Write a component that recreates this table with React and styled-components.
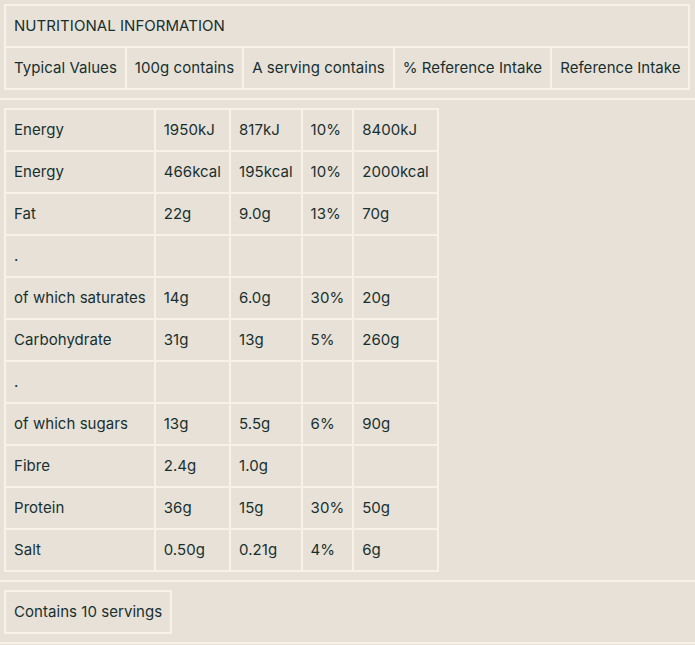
import React from 'react';
import styled, { createGlobalStyle } from 'styled-components';

const GlobalStyle = createGlobalStyle`
  html, body {
    margin: 0;
    padding: 0;
    background: #e8e1d8;
  }
  body {
    font-family: Inter, 'Noto Sans', sans-serif;
    color: #17302f;
  }
`;

const Page = styled.div`
  width: 695px;
  background: #e8e1d8;
`;

const Section = styled.div`
  padding: 4px 6px 8px 4px;
  border-bottom: 2px solid #f8f1e6;
  & + & {
    padding-top: 8px;
  }
`;

const Table = styled.table`
  border-collapse: collapse;
  width: ${(p) => (p.$full ? '100%' : 'auto')};
  font-size: 15px;
  line-height: 18px;
`;

const Cell = styled.td`
  border: 2px solid #f8f1e6;
  padding: 11px 8px;
  white-space: nowrap;
  text-align: left;
  font-weight: 400;
  letter-spacing: 0.05px;
`;

const TitleCell = styled(Cell)`
  text-transform: uppercase;
`;

const rows = [
  ['Energy', '1950kJ', '817kJ', '10%', '8400kJ'],
  ['Energy', '466kcal', '195kcal', '10%', '2000kcal'],
  ['Fat', '22g', '9.0g', '13%', '70g'],
  ['.', '', '', '', ''],
  ['of which saturates', '14g', '6.0g', '30%', '20g'],
  ['Carbohydrate', '31g', '13g', '5%', '260g'],
  ['.', '', '', '', ''],
  ['of which sugars', '13g', '5.5g', '6%', '90g'],
  ['Fibre', '2.4g', '1.0g', '', ''],
  ['Protein', '36g', '15g', '30%', '50g'],
  ['Salt', '0.50g', '0.21g', '4%', '6g'],
];

const headers = [
  'Typical Values',
  '100g contains',
  'A serving contains',
  '% Reference Intake',
  'Reference Intake',
];

export default function App() {
  return (
    <Page>
      <GlobalStyle />
      <Section>
        <Table $full>
          <tbody>
            <tr>
              <TitleCell colSpan={5}>Nutritional Information</TitleCell>
            </tr>
            <tr>
              {headers.map((h) => (
                <Cell key={h}>{h}</Cell>
              ))}
            </tr>
          </tbody>
        </Table>
      </Section>
      <Section>
        <Table>
          <tbody>
            {rows.map((r, i) => (
              <tr key={i}>
                {r.map((c, j) => (
                  <Cell key={j}>{c}</Cell>
                ))}
              </tr>
            ))}
          </tbody>
        </Table>
      </Section>
      <Section>
        <Table>
          <tbody>
            <tr>
              <Cell>Contains 10 servings</Cell>
            </tr>
          </tbody>
        </Table>
      </Section>
    </Page>
  );
}
